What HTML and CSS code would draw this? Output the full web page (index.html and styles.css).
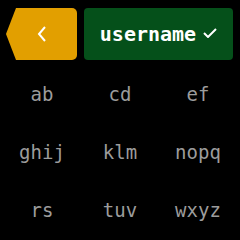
FILE: index.html
```html
<!DOCTYPE html>
<html>
<head>
<meta charset="utf-8">
<link rel="stylesheet" href="styles.css">
</head>
<body>
<div class="screen">
  <div class="header">
    <div class="back">
      <svg class="chev" width="12" height="16" viewBox="0 0 12 16"><path d="M9 1 L3 8 L9 15" fill="none" stroke="#fff" stroke-width="2"/></svg>
    </div>
    <div class="user">
      <span class="name">username</span>
      <svg class="check" width="14" height="10" viewBox="0 0 14 10"><path d="M1 5 L5 9 L13 1" fill="none" stroke="#fff" stroke-width="2"/></svg>
    </div>
  </div>
  <div class="keys">
    <div class="key">ab</div>
    <div class="key">cd</div>
    <div class="key">ef</div>
    <div class="key">ghij</div>
    <div class="key">klm</div>
    <div class="key">nopq</div>
    <div class="key">rs</div>
    <div class="key">tuv</div>
    <div class="key">wxyz</div>
  </div>
</div>
</body>
</html>
```
FILE: styles.css
```css
html, body {
  margin: 0;
  padding: 0;
  background: #000;
}
.screen {
  width: 240px;
  height: 240px;
  overflow: hidden;
  font-family: "DejaVu Sans Mono", "Liberation Mono", monospace;
}
.header {
  display: flex;
  gap: 7px;
  padding: 8px 0 0 6px;
  height: 52px;
}
.back {
  width: 71px;
  height: 52px;
  background: #e29f00;
  clip-path: polygon(10px 0, 100% 0, 100% 100%, 10px 100%, 0 50%);
  border-radius: 0 5px 5px 0;
  display: flex;
  align-items: center;
  justify-content: center;
}
.user {
  width: 149px;
  height: 52px;
  background: #05501a;
  border-radius: 4px;
  display: flex;
  align-items: center;
  justify-content: center;
  gap: 7px;
}
.name {
  color: #fff;
  font-size: 20px;
  font-weight: bold;
  line-height: 1;
}
.check {
  margin-top: -2px;
}
.keys {
  display: grid;
  grid-template-columns: repeat(3, 78px);
  grid-auto-rows: 58px;
  padding: 5px 0 0 3px;
}
.key {
  display: flex;
  align-items: center;
  justify-content: center;
  color: #9c9c9c;
  font-size: 19px;
}
```
